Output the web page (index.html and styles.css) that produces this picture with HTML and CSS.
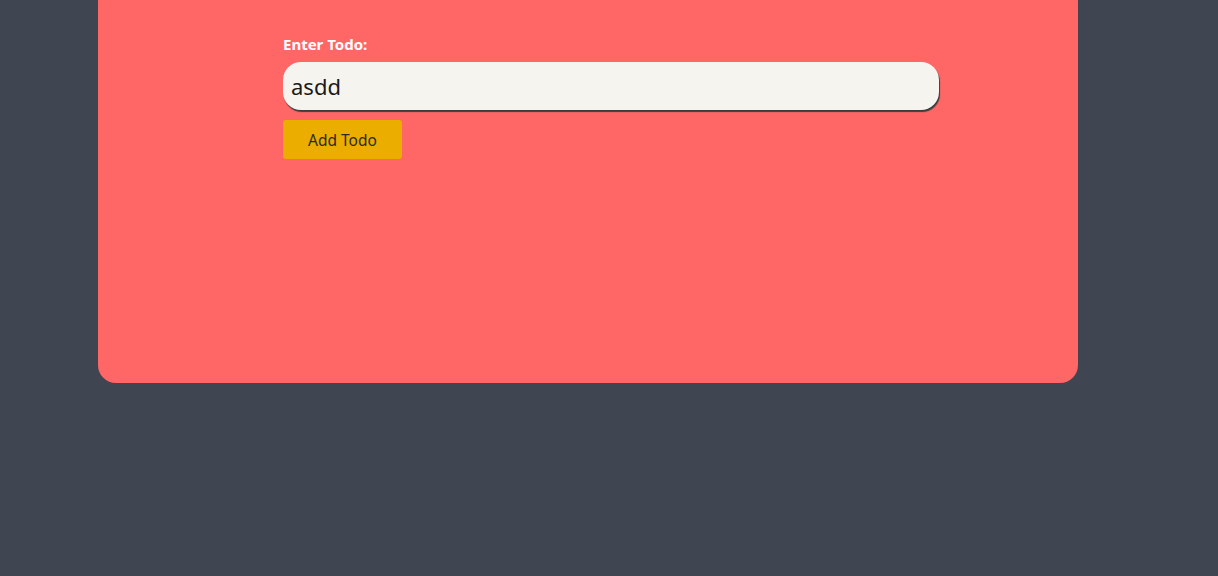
FILE: index.html
```html
<!DOCTYPE html>
<html>
<head>
<meta charset="utf-8">
<link rel="stylesheet" href="styles.css">
</head>
<body>
<div class="card">
  <form class="todo-form">
    <label class="label" for="todo">Enter Todo:</label>
    <input class="input" id="todo" type="text" value="asdd">
    <button class="btn" type="button">Add Todo</button>
  </form>
</div>
</body>
</html>
```

FILE: styles.css
```css
html, body {
  margin: 0;
  padding: 0;
  background: #3f4551;
  font-family: "Noto Sans", "Open Sans", sans-serif;
}
.card {
  box-sizing: border-box;
  width: 980px;
  height: 399px;
  margin: -16px 0 0 98px;
  background: #ff6666;
  border-radius: 18px;
  padding: 50px 0 0 185px;
}
.todo-form {
  display: flex;
  flex-direction: column;
  align-items: flex-start;
}
.label {
  color: #ffffff;
  font-weight: 700;
  font-size: 15px;
  line-height: 20px;
  margin-bottom: 8px;
}
.input {
  box-sizing: border-box;
  width: 656px;
  height: 48px;
  border: none;
  outline: none;
  border-radius: 18px;
  background: #f5f4ef;
  box-shadow: 1px 2px 1px #3a3d3d;
  padding: 0 8px;
  font-family: "Noto Sans", "Open Sans", sans-serif;
  font-size: 22px;
  color: #1a1a1a;
}
.btn {
  margin-top: 10px;
  width: 119px;
  height: 39px;
  border: none;
  border-radius: 3px;
  background: #ebad00;
  color: #2a2a2a;
  font-family: "Noto Sans", "Open Sans", sans-serif;
  font-size: 15.5px;
}
```
